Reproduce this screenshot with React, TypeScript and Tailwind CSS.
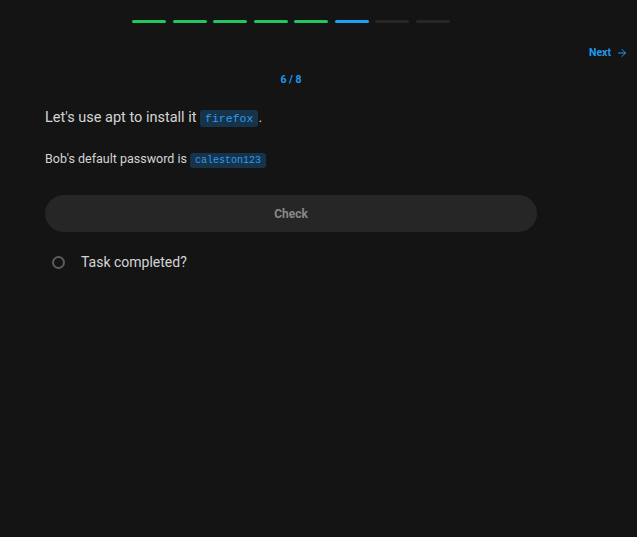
import React from "react";
import { ArrowRight } from "lucide-react";

const STEPS = 8;
const CURRENT = 6;

const Code: React.FC<{ children: React.ReactNode }> = ({ children }) => (
  <code className="rounded-[3px] bg-[#163349] px-[5px] py-[2px] font-['Liberation_Mono',monospace] text-[#2d9cf0]">
    {children}
  </code>
);

const App: React.FC = () => {
  return (
    <div className="min-h-[537px] w-full bg-[#141414] font-['Roboto',sans-serif]">
      <div className="ml-[45px] flex w-[492px] justify-center pt-[20px]">
        <div className="flex gap-[6.5px]">
          {Array.from({ length: STEPS }).map((_, i) => {
            const color =
              i + 1 < CURRENT ? "bg-[#22c55e]" : i + 1 === CURRENT ? "bg-[#1ea0f5]" : "bg-[#262626]";
            return <div key={i} className={`h-[3px] w-[34px] rounded-full ${color}`} />;
          })}
        </div>
      </div>

      <div className="flex justify-end pr-[9px] pt-[22px]">
        <button className="flex items-center gap-[5px] text-[10.5px] font-bold text-[#1e9bf0]">
          Next
          <ArrowRight className="h-[12px] w-[12px]" strokeWidth={2} />
        </button>
      </div>

      <div className="ml-[45px] w-[492px]">
        <div className="mt-[11px] text-center text-[10.5px] font-bold text-[#1e9bf0]">6 / 8</div>

        <p className="mt-[19px] text-[14.5px] text-[#d4d4d4]">
          Let's use apt to install it <span className="text-[11.5px]"><Code>firefox</Code></span>.
        </p>

        <p className="mt-[22px] text-[12.5px] text-[#d4d4d4]">
          Bob's default password is <span className="text-[10px]"><Code>caleston123</Code></span>
        </p>

        <button className="mt-[26px] flex h-[37px] w-full items-center justify-center rounded-full bg-[#262626] text-[12px] font-bold text-[#888888]">
          Check
        </button>

        <div className="mt-[20px] flex items-center">
          <span className="ml-[7px] h-[13px] w-[13px] rounded-full border-[2.5px] border-[#5c5c5c]" />
          <span className="ml-[16px] text-[14px] text-[#d4d4d4]">Task completed?</span>
        </div>
      </div>
    </div>
  );
};

export default App;
